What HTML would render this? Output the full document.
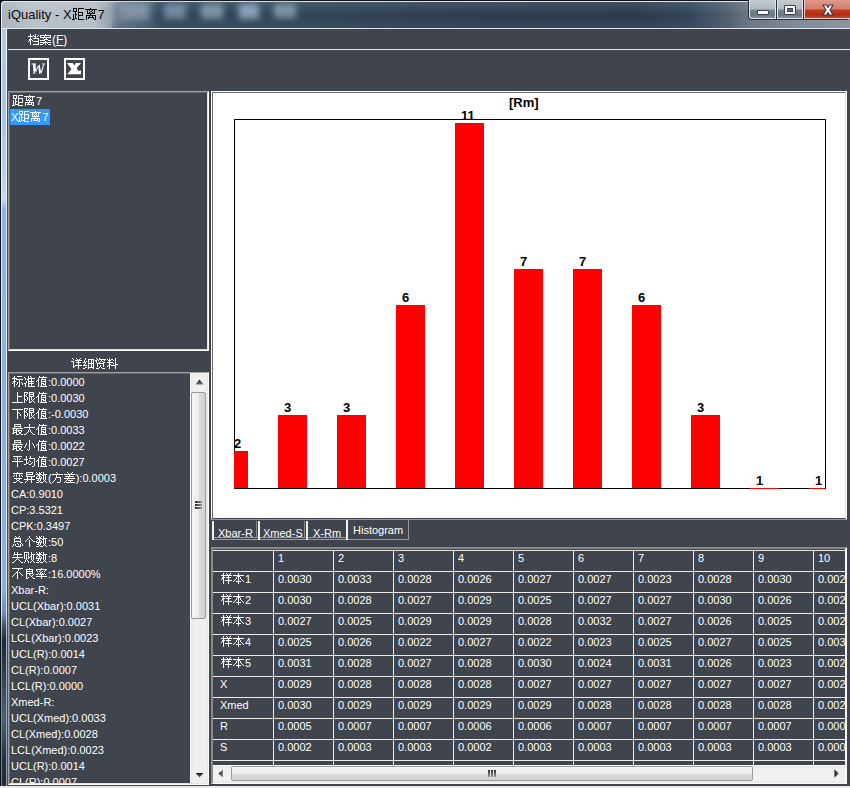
<!DOCTYPE html>
<html><head><meta charset="utf-8"><title>iQuality</title>
<style>
*{margin:0;padding:0;box-sizing:border-box}
html,body{width:850px;height:788px;overflow:hidden;background:#40454d;font-family:"Liberation Sans",sans-serif;}
.a{position:absolute}
.g{display:inline-block;fill:currentColor;shape-rendering:crispEdges}
.txt{position:absolute;font-size:11px;color:#fff;white-space:nowrap;line-height:16px}
.lbl{position:absolute;font:bold 13px "Liberation Sans",sans-serif;color:#000;line-height:14px;white-space:nowrap}
.hl{position:absolute;left:0;width:632px;height:1px;background:#ececec}
.vl{position:absolute;top:0;width:1px;height:215px;background:#ececec}
.tab{position:absolute;top:520px;height:20px;border-top:1px solid #8a8a8a;border-left:1px solid #fff;border-right:1px solid #8a8a8a;border-bottom:1px solid #8a8a8a;font-size:11px;color:#fff;white-space:nowrap;line-height:16px}
</style></head><body>
<div class="a" style="left:8px;top:29px;width:842px;height:759px;background:#40454d"></div>
<div class="a" style="left:0;top:0;width:850px;height:1px;background:#0d1218"></div>
<div class="a" style="left:1px;top:1px;width:849px;height:1px;background:#dfe6ec"></div>
<div class="a" style="left:0;top:2px;width:850px;height:26px;background:linear-gradient(90deg,#a9b2bb 0px,#b9c1c9 30px,#b6bec6 95px,#97a3ae 110px,#6a7d90 118px,#4a5e72 150px,#34485b 160px,#33475a 300px,#2e4051 450px,#2c3d4d 640px,#34475a 690px,#4f5f6e 725px,#6c7884 750px,#808c97 800px,#8a95a0 850px)"></div>
<div class="a" style="left:112px;top:19px;width:600px;height:9px;background:linear-gradient(180deg,rgba(70,90,110,0),rgba(70,90,110,.35));"></div>
<div class="a" style="left:119px;top:4px;width:30px;height:15px;background:#7f92a4;filter:blur(3px)"></div>
<div class="a" style="left:164px;top:4px;width:22px;height:15px;background:#6f86a0;filter:blur(3px)"></div>
<div class="a" style="left:201px;top:4px;width:22px;height:15px;background:#7890a6;filter:blur(3px)"></div>
<div class="a" style="left:239px;top:4px;width:20px;height:15px;background:#86a0b8;filter:blur(3px)"></div>
<div class="a" style="left:274px;top:4px;width:22px;height:14px;background:#7a91a6;filter:blur(3px)"></div>
<div class="a" style="left:0;top:2px;width:1px;height:26px;background:#0d1218"></div>
<div class="a" style="left:1px;top:2px;width:1px;height:26px;background:#e9eef3"></div>
<div class="a" style="left:0;top:2px;width:850px;height:12px;background:linear-gradient(180deg,rgba(255,255,255,.10),rgba(255,255,255,0))"></div>
<svg class="a" style="left:0;top:0" width="8" height="8"><path d="M0 0H8V1H5Q1 1 1 5V8H0Z" fill="#0d1218"/><path d="M8 1V2H5.5Q2 2 2 5.5V8H1V5Q1 1 5 1Z" fill="#e9eef3"/></svg>
<div class="a" style="left:1px;top:28px;width:849px;height:1px;background:#dde4ea"></div>
<div class="a" style="left:8px;top:7px;font-size:13px;line-height:16px;color:#0a0a0a;white-space:nowrap">iQuality - X<svg class="g" width="13" height="13" style="vertical-align:-1px"><path d="M1 1h4v1h-4zM6 1h6v1h-6zM1 2h1v1h-1zM4 2h1v1h-1zM6 2h1v1h-1zM1 3h1v1h-1zM4 3h1v1h-1zM6 3h1v1h-1zM1 4h4v1h-4zM6 4h1v1h-1zM3 5h1v1h-1zM6 5h5v1h-5zM3 6h1v1h-1zM6 6h1v1h-1zM10 6h1v1h-1zM1 7h1v1h-1zM3 7h2v1h-2zM6 7h1v1h-1zM10 7h1v1h-1zM1 8h1v1h-1zM3 8h1v1h-1zM6 8h5v1h-5zM1 9h1v1h-1zM3 9h1v1h-1zM6 9h1v1h-1zM1 10h1v1h-1zM3 10h1v1h-1zM6 10h1v1h-1zM1 11h1v1h-1zM3 11h2v1h-2zM6 11h1v1h-1zM0 12h3v1h-3zM6 12h6v1h-6z"/></svg><svg class="g" width="13" height="13" style="vertical-align:-1px"><path d="M5 1h1v1h-1zM0 2h12v1h-12zM2 3h1v1h-1zM4 3h1v1h-1zM7 3h1v1h-1zM9 3h1v1h-1zM2 4h1v1h-1zM5 4h2v1h-2zM9 4h1v1h-1zM2 5h1v1h-1zM4 5h1v1h-1zM7 5h1v1h-1zM9 5h1v1h-1zM2 6h8v1h-8zM5 7h1v1h-1zM1 8h10v1h-10zM1 9h1v1h-1zM4 9h1v1h-1zM7 9h1v1h-1zM10 9h1v1h-1zM1 10h1v1h-1zM3 10h6v1h-6zM10 10h1v1h-1zM1 11h1v1h-1zM3 11h1v1h-1zM8 11h1v1h-1zM10 11h1v1h-1zM1 12h1v1h-1zM9 12h2v1h-2z"/></svg>7</div>
<div class="a" style="left:748px;top:0;width:102px;height:20px;background:#2a3038;border-radius:0 0 4px 4px"></div>
<div class="a" style="left:749px;top:0;width:27px;height:19px;border:1px solid #dfe3e7;border-top:none;border-radius:0 0 0 3px;background:linear-gradient(180deg,#c4cad0 0,#b0b8c0 9px,#7a8692 10px,#6a7783 15px,#8d98a3 19px)"></div>
<div class="a" style="left:777px;top:0;width:26px;height:19px;border:1px solid #dfe3e7;border-top:none;background:linear-gradient(180deg,#c4cad0 0,#b0b8c0 9px,#7a8692 10px,#6a7783 15px,#8d98a3 19px)"></div>
<div class="a" style="left:804px;top:0;width:46px;height:19px;border:1px solid #f0c8c0;border-top:none;border-right:none;background:linear-gradient(180deg,#e09a8a 0,#d47d6b 9px,#c4381f 10px,#b22e16 15px,#c65840 19px)"></div>
<div class="a" style="left:803px;top:0;width:1px;height:19px;background:#5a1a10"></div>
<div class="a" style="left:757px;top:10px;width:12px;height:5px;background:#fff;border:1px solid #3a4250;border-radius:1px"></div>
<div class="a" style="left:784px;top:5px;width:12px;height:10px;background:#fff;border:1px solid #3a4250;border-radius:1px"></div>
<div class="a" style="left:787px;top:8px;width:6px;height:4px;background:#5d6976;border:1px solid #3a4250"></div>
<svg class="a" style="left:820px;top:3px" width="16" height="14" viewBox="0 0 16 14"><path d="M3 2 L6.5 2 L8 4.5 L9.5 2 L13 2 L10 7 L13 12 L9.5 12 L8 9.5 L6.5 12 L3 12 L6 7 Z" fill="#fff" stroke="#394250" stroke-width="1.2" stroke-linejoin="round"/></svg>
<div class="a" style="left:0;top:29px;width:1px;height:759px;background:#0a0f16"></div>
<div class="a" style="left:1px;top:29px;width:1px;height:759px;background:linear-gradient(180deg,#f2f6fa 0,#e8f0f8 580px,#8a9aaa 612px,#707e8c 759px)"></div>
<div class="a" style="left:2px;top:29px;width:4px;height:759px;background:linear-gradient(180deg,#b4c8e4 0,#a8c4ea 90px,#b8d0f0 150px,#c4daf4 170px,#8cb2e8 180px,#88aede 560px,#6a8cb8 585px,#3a5068 598px,#1e2c3a 612px,#2a3c4e 640px,#4a6276 690px,#23313f 730px,#1e2a36 759px)"></div>
<div class="a" style="left:6px;top:29px;width:1px;height:759px;background:linear-gradient(180deg,#eef4fa 0,#e0eaf6 580px,#a0b0c0 612px,#90a0b0 759px)"></div>
<div class="a" style="left:7px;top:29px;width:1px;height:759px;background:#3c4e64"></div>
<div class="txt" style="left:28px;top:32px;"><svg class="g" width="12" height="12" style="vertical-align:-1px"><path d="M2 1h1v1h-1zM7 1h1v1h-1zM2 2h1v1h-1zM5 2h1v1h-1zM7 2h1v1h-1zM10 2h1v1h-1zM0 3h5v1h-5zM6 3h2v1h-2zM9 3h1v1h-1zM2 4h1v1h-1zM7 4h1v1h-1zM2 5h1v1h-1zM5 5h6v1h-6zM1 6h3v1h-3zM10 6h1v1h-1zM1 7h2v1h-2zM4 7h1v1h-1zM10 7h1v1h-1zM0 8h1v1h-1zM2 8h1v1h-1zM5 8h6v1h-6zM2 9h1v1h-1zM10 9h1v1h-1zM2 10h1v1h-1zM10 10h1v1h-1zM2 11h1v1h-1zM5 11h6v1h-6z"/></svg><svg class="g" width="12" height="12" style="vertical-align:-1px"><path d="M5 1h1v1h-1zM0 2h11v1h-11zM0 3h1v1h-1zM4 3h1v1h-1zM10 3h1v1h-1zM0 4h11v1h-11zM3 5h1v1h-1zM6 5h1v1h-1zM4 6h4v1h-4zM0 7h5v1h-5zM8 7h3v1h-3zM5 8h1v1h-1zM0 9h11v1h-11zM3 10h1v1h-1zM5 10h1v1h-1zM7 10h1v1h-1zM0 11h3v1h-3zM5 11h1v1h-1zM8 11h3v1h-3z"/></svg><span style="font-size:12px">(<u>F</u>)</span></div>
<div class="a" style="left:8px;top:49px;width:842px;height:1px;background:#e4e4e4"></div>
<div class="a" style="left:28px;top:58px;width:21px;height:22px;border:2px solid #fff"></div>
<svg class="a" style="left:28px;top:58px" width="21" height="22" viewBox="0 0 21 22"><path fill="#fff" d="M3.4 5.6H8V6.6H3.4ZM5 6L7.6 6L8.2 16L5.6 16ZM6.3 16L7.5 16L11.2 6.5L10.4 6.5ZM10.2 6.5L11.6 6.5L13.4 16L11.2 16ZM12.3 16L13.5 16L16.2 6.2L15.2 6.2ZM14.2 5.6H17V6.6H14.2Z"/></svg>
<div class="a" style="left:64px;top:58px;width:21px;height:22px;border:2px solid #fff"></div>
<svg class="a" style="left:64px;top:58px" width="21" height="22" viewBox="0 0 21 22"><path fill="#fff" d="M3 5.1L8.6 5.1L17 16.2L11.2 16.2ZM11.8 5.1L17 5.1L12.4 10.4L10.4 7.8ZM3.3 16.2L7.8 10.8L11.4 16.2ZM12.8 13.2L17 12.6L17 16.2L12 16.2Z"/></svg>
<div class="a" style="left:8px;top:91px;width:201px;height:260px;border-top:1px solid #a0a0a0;border-left:1px solid #a0a0a0;border-right:1px solid #fff;border-bottom:1px solid #fff"></div>
<div class="a" style="left:9px;top:92px;width:199px;height:258px;border-top:1px solid #696969;border-left:1px solid #696969;border-right:1px solid #e3e3e3;border-bottom:1px solid #e3e3e3"></div>
<div class="txt" style="left:12px;top:93px"><svg class="g" width="12" height="12" style="vertical-align:-1px"><path d="M1 1h4v1h-4zM6 1h5v1h-5zM1 2h1v1h-1zM4 2h1v1h-1zM6 2h1v1h-1zM1 3h1v1h-1zM4 3h1v1h-1zM6 3h1v1h-1zM1 4h4v1h-4zM6 4h5v1h-5zM3 5h1v1h-1zM6 5h1v1h-1zM10 5h1v1h-1zM1 6h1v1h-1zM3 6h1v1h-1zM6 6h1v1h-1zM10 6h1v1h-1zM1 7h1v1h-1zM3 7h2v1h-2zM6 7h1v1h-1zM10 7h1v1h-1zM1 8h1v1h-1zM3 8h1v1h-1zM6 8h5v1h-5zM1 9h1v1h-1zM3 9h1v1h-1zM6 9h1v1h-1zM1 10h1v1h-1zM3 10h4v1h-4zM0 11h3v1h-3zM6 11h5v1h-5z"/></svg><svg class="g" width="12" height="12" style="vertical-align:-1px"><path d="M5 1h1v1h-1zM0 2h11v1h-11zM2 3h1v1h-1zM4 3h1v1h-1zM6 3h1v1h-1zM8 3h1v1h-1zM2 4h1v1h-1zM5 4h1v1h-1zM8 4h1v1h-1zM2 5h1v1h-1zM4 5h1v1h-1zM6 5h1v1h-1zM8 5h1v1h-1zM2 6h7v1h-7zM5 7h1v1h-1zM1 8h9v1h-9zM1 9h1v1h-1zM4 9h1v1h-1zM7 9h1v1h-1zM9 9h1v1h-1zM1 10h1v1h-1zM3 10h5v1h-5zM9 10h1v1h-1zM1 11h1v1h-1zM8 11h2v1h-2z"/></svg>7</div>
<div class="a" style="left:10px;top:109px;width:40px;height:16px;background:#3399ff"></div>
<div class="txt" style="left:11px;top:109px">X<svg class="g" width="12" height="12" style="vertical-align:-1px"><path d="M1 1h4v1h-4zM6 1h5v1h-5zM1 2h1v1h-1zM4 2h1v1h-1zM6 2h1v1h-1zM1 3h1v1h-1zM4 3h1v1h-1zM6 3h1v1h-1zM1 4h4v1h-4zM6 4h5v1h-5zM3 5h1v1h-1zM6 5h1v1h-1zM10 5h1v1h-1zM1 6h1v1h-1zM3 6h1v1h-1zM6 6h1v1h-1zM10 6h1v1h-1zM1 7h1v1h-1zM3 7h2v1h-2zM6 7h1v1h-1zM10 7h1v1h-1zM1 8h1v1h-1zM3 8h1v1h-1zM6 8h5v1h-5zM1 9h1v1h-1zM3 9h1v1h-1zM6 9h1v1h-1zM1 10h1v1h-1zM3 10h4v1h-4zM0 11h3v1h-3zM6 11h5v1h-5z"/></svg><svg class="g" width="12" height="12" style="vertical-align:-1px"><path d="M5 1h1v1h-1zM0 2h11v1h-11zM2 3h1v1h-1zM4 3h1v1h-1zM6 3h1v1h-1zM8 3h1v1h-1zM2 4h1v1h-1zM5 4h1v1h-1zM8 4h1v1h-1zM2 5h1v1h-1zM4 5h1v1h-1zM6 5h1v1h-1zM8 5h1v1h-1zM2 6h7v1h-7zM5 7h1v1h-1zM1 8h9v1h-9zM1 9h1v1h-1zM4 9h1v1h-1zM7 9h1v1h-1zM9 9h1v1h-1zM1 10h1v1h-1zM3 10h5v1h-5zM9 10h1v1h-1zM1 11h1v1h-1zM8 11h2v1h-2z"/></svg>7</div>
<div class="txt" style="left:71px;top:356px"><svg class="g" width="12" height="12" style="vertical-align:-1px"><path d="M1 1h1v1h-1zM5 1h1v1h-1zM9 1h1v1h-1zM2 2h1v1h-1zM6 2h1v1h-1zM8 2h1v1h-1zM4 3h7v1h-7zM0 4h3v1h-3zM7 4h1v1h-1zM2 5h1v1h-1zM5 5h5v1h-5zM2 6h1v1h-1zM7 6h1v1h-1zM2 7h1v1h-1zM7 7h1v1h-1zM2 8h1v1h-1zM4 8h7v1h-7zM2 9h2v1h-2zM7 9h1v1h-1zM2 10h1v1h-1zM7 10h1v1h-1zM7 11h1v1h-1z"/></svg><svg class="g" width="12" height="12" style="vertical-align:-1px"><path d="M2 1h1v1h-1zM2 2h1v1h-1zM5 2h6v1h-6zM1 3h1v1h-1zM5 3h1v1h-1zM8 3h1v1h-1zM10 3h1v1h-1zM1 4h1v1h-1zM3 4h1v1h-1zM5 4h1v1h-1zM8 4h1v1h-1zM10 4h1v1h-1zM0 5h3v1h-3zM5 5h1v1h-1zM8 5h1v1h-1zM10 5h1v1h-1zM2 6h1v1h-1zM5 6h6v1h-6zM1 7h1v1h-1zM5 7h1v1h-1zM8 7h1v1h-1zM10 7h1v1h-1zM0 8h4v1h-4zM5 8h1v1h-1zM8 8h1v1h-1zM10 8h1v1h-1zM5 9h1v1h-1zM8 9h1v1h-1zM10 9h1v1h-1zM2 10h2v1h-2zM5 10h6v1h-6zM0 11h2v1h-2zM5 11h1v1h-1zM10 11h1v1h-1z"/></svg><svg class="g" width="12" height="12" style="vertical-align:-1px"><path d="M1 1h1v1h-1zM4 1h1v1h-1zM2 2h1v1h-1zM4 2h7v1h-7zM0 3h2v1h-2zM3 3h1v1h-1zM6 3h1v1h-1zM9 3h1v1h-1zM1 4h1v1h-1zM5 4h1v1h-1zM7 4h1v1h-1zM1 5h1v1h-1zM4 5h1v1h-1zM8 5h2v1h-2zM2 6h7v1h-7zM2 7h1v1h-1zM8 7h1v1h-1zM2 8h1v1h-1zM5 8h1v1h-1zM8 8h1v1h-1zM2 9h1v1h-1zM5 9h1v1h-1zM8 9h1v1h-1zM4 10h1v1h-1zM6 10h1v1h-1zM1 11h3v1h-3zM7 11h3v1h-3z"/></svg><svg class="g" width="12" height="12" style="vertical-align:-1px"><path d="M2 1h1v1h-1zM8 1h1v1h-1zM0 2h1v1h-1zM2 2h1v1h-1zM4 2h2v1h-2zM8 2h1v1h-1zM1 3h3v1h-3zM6 3h1v1h-1zM8 3h1v1h-1zM2 4h1v1h-1zM8 4h1v1h-1zM0 5h6v1h-6zM8 5h1v1h-1zM2 6h1v1h-1zM6 6h1v1h-1zM8 6h1v1h-1zM2 7h2v1h-2zM8 7h3v1h-3zM1 8h2v1h-2zM4 8h5v1h-5zM0 9h1v1h-1zM2 9h1v1h-1zM8 9h1v1h-1zM2 10h1v1h-1zM8 10h1v1h-1zM2 11h1v1h-1zM8 11h1v1h-1z"/></svg></div>
<div class="a" style="left:8px;top:372px;width:201px;height:413px;border-top:1px solid #a0a0a0;border-left:1px solid #a0a0a0;border-right:1px solid #fff;border-bottom:1px solid #fff"></div>
<div class="a" style="left:9px;top:373px;width:199px;height:411px;border-top:1px solid #696969;border-left:1px solid #696969;border-right:1px solid #e3e3e3;border-bottom:1px solid #e3e3e3"></div>
<div class="a" style="left:9px;top:373px;width:181px;height:410px;overflow:hidden">
<div class="txt" style="left:3px;top:1px"><svg class="g" width="12" height="12" style="vertical-align:-1px"><path d="M2 1h1v1h-1zM5 1h5v1h-5zM2 2h1v1h-1zM0 3h5v1h-5zM2 4h1v1h-1zM4 4h7v1h-7zM2 5h1v1h-1zM7 5h1v1h-1zM1 6h3v1h-3zM7 6h1v1h-1zM1 7h2v1h-2zM5 7h1v1h-1zM7 7h1v1h-1zM9 7h1v1h-1zM0 8h1v1h-1zM2 8h1v1h-1zM5 8h1v1h-1zM7 8h1v1h-1zM10 8h1v1h-1zM2 9h1v1h-1zM4 9h1v1h-1zM7 9h1v1h-1zM10 9h1v1h-1zM2 10h1v1h-1zM7 10h1v1h-1zM2 11h1v1h-1zM6 11h2v1h-2z"/></svg><svg class="g" width="12" height="12" style="vertical-align:-1px"><path d="M4 1h1v1h-1zM6 1h1v1h-1zM0 2h1v1h-1zM4 2h1v1h-1zM7 2h1v1h-1zM1 3h1v1h-1zM4 3h7v1h-7zM1 4h1v1h-1zM3 4h2v1h-2zM7 4h1v1h-1zM4 5h1v1h-1zM7 5h1v1h-1zM2 6h1v1h-1zM4 6h6v1h-6zM2 7h1v1h-1zM4 7h1v1h-1zM7 7h1v1h-1zM0 8h2v1h-2zM4 8h6v1h-6zM1 9h1v1h-1zM4 9h1v1h-1zM7 9h1v1h-1zM1 10h1v1h-1zM4 10h1v1h-1zM7 10h1v1h-1zM1 11h1v1h-1zM4 11h7v1h-7z"/></svg><svg class="g" width="12" height="12" style="vertical-align:-1px"><path d="M3 1h1v1h-1zM7 1h1v1h-1zM3 2h8v1h-8zM2 3h1v1h-1zM6 3h1v1h-1zM2 4h1v1h-1zM5 4h5v1h-5zM1 5h2v1h-2zM5 5h1v1h-1zM9 5h1v1h-1zM0 6h1v1h-1zM2 6h1v1h-1zM5 6h5v1h-5zM2 7h1v1h-1zM5 7h1v1h-1zM9 7h1v1h-1zM2 8h1v1h-1zM5 8h3v1h-3zM9 8h1v1h-1zM2 9h1v1h-1zM5 9h1v1h-1zM7 9h3v1h-3zM2 10h1v1h-1zM5 10h1v1h-1zM9 10h1v1h-1zM2 11h1v1h-1zM4 11h7v1h-7z"/></svg>:0.0000</div>
<div class="txt" style="left:3px;top:17px"><svg class="g" width="12" height="12" style="vertical-align:-1px"><path d="M5 1h1v1h-1zM5 2h1v1h-1zM5 3h1v1h-1zM5 4h1v1h-1zM5 5h5v1h-5zM5 6h1v1h-1zM5 7h1v1h-1zM5 8h1v1h-1zM5 9h1v1h-1zM5 10h1v1h-1zM0 11h11v1h-11z"/></svg><svg class="g" width="12" height="12" style="vertical-align:-1px"><path d="M0 1h4v1h-4zM5 1h5v1h-5zM0 2h1v1h-1zM3 2h1v1h-1zM5 2h1v1h-1zM9 2h1v1h-1zM0 3h1v1h-1zM2 3h1v1h-1zM5 3h5v1h-5zM0 4h2v1h-2zM5 4h1v1h-1zM9 4h1v1h-1zM0 5h1v1h-1zM2 5h1v1h-1zM5 5h5v1h-5zM0 6h1v1h-1zM3 6h1v1h-1zM5 6h1v1h-1zM7 6h1v1h-1zM0 7h1v1h-1zM3 7h1v1h-1zM5 7h1v1h-1zM7 7h1v1h-1zM10 7h1v1h-1zM0 8h2v1h-2zM3 8h1v1h-1zM5 8h1v1h-1zM7 8h1v1h-1zM9 8h1v1h-1zM0 9h1v1h-1zM2 9h1v1h-1zM5 9h1v1h-1zM8 9h1v1h-1zM0 10h1v1h-1zM5 10h1v1h-1zM7 10h1v1h-1zM9 10h1v1h-1zM0 11h1v1h-1zM5 11h2v1h-2zM10 11h1v1h-1z"/></svg><svg class="g" width="12" height="12" style="vertical-align:-1px"><path d="M3 1h1v1h-1zM7 1h1v1h-1zM3 2h8v1h-8zM2 3h1v1h-1zM6 3h1v1h-1zM2 4h1v1h-1zM5 4h5v1h-5zM1 5h2v1h-2zM5 5h1v1h-1zM9 5h1v1h-1zM0 6h1v1h-1zM2 6h1v1h-1zM5 6h5v1h-5zM2 7h1v1h-1zM5 7h1v1h-1zM9 7h1v1h-1zM2 8h1v1h-1zM5 8h3v1h-3zM9 8h1v1h-1zM2 9h1v1h-1zM5 9h1v1h-1zM7 9h3v1h-3zM2 10h1v1h-1zM5 10h1v1h-1zM9 10h1v1h-1zM2 11h1v1h-1zM4 11h7v1h-7z"/></svg>:0.0030</div>
<div class="txt" style="left:3px;top:33px"><svg class="g" width="12" height="12" style="vertical-align:-1px"><path d="M0 2h11v1h-11zM5 3h1v1h-1zM5 4h1v1h-1zM5 5h2v1h-2zM5 6h1v1h-1zM7 6h1v1h-1zM5 7h1v1h-1zM8 7h1v1h-1zM5 8h1v1h-1zM8 8h1v1h-1zM5 9h1v1h-1zM5 10h1v1h-1zM5 11h1v1h-1z"/></svg><svg class="g" width="12" height="12" style="vertical-align:-1px"><path d="M0 1h4v1h-4zM5 1h5v1h-5zM0 2h1v1h-1zM3 2h1v1h-1zM5 2h1v1h-1zM9 2h1v1h-1zM0 3h1v1h-1zM2 3h1v1h-1zM5 3h5v1h-5zM0 4h2v1h-2zM5 4h1v1h-1zM9 4h1v1h-1zM0 5h1v1h-1zM2 5h1v1h-1zM5 5h5v1h-5zM0 6h1v1h-1zM3 6h1v1h-1zM5 6h1v1h-1zM7 6h1v1h-1zM0 7h1v1h-1zM3 7h1v1h-1zM5 7h1v1h-1zM7 7h1v1h-1zM10 7h1v1h-1zM0 8h2v1h-2zM3 8h1v1h-1zM5 8h1v1h-1zM7 8h1v1h-1zM9 8h1v1h-1zM0 9h1v1h-1zM2 9h1v1h-1zM5 9h1v1h-1zM8 9h1v1h-1zM0 10h1v1h-1zM5 10h1v1h-1zM7 10h1v1h-1zM9 10h1v1h-1zM0 11h1v1h-1zM5 11h2v1h-2zM10 11h1v1h-1z"/></svg><svg class="g" width="12" height="12" style="vertical-align:-1px"><path d="M3 1h1v1h-1zM7 1h1v1h-1zM3 2h8v1h-8zM2 3h1v1h-1zM6 3h1v1h-1zM2 4h1v1h-1zM5 4h5v1h-5zM1 5h2v1h-2zM5 5h1v1h-1zM9 5h1v1h-1zM0 6h1v1h-1zM2 6h1v1h-1zM5 6h5v1h-5zM2 7h1v1h-1zM5 7h1v1h-1zM9 7h1v1h-1zM2 8h1v1h-1zM5 8h3v1h-3zM9 8h1v1h-1zM2 9h1v1h-1zM5 9h1v1h-1zM7 9h3v1h-3zM2 10h1v1h-1zM5 10h1v1h-1zM9 10h1v1h-1zM2 11h1v1h-1zM4 11h7v1h-7z"/></svg>:-0.0030</div>
<div class="txt" style="left:3px;top:49px"><svg class="g" width="12" height="12" style="vertical-align:-1px"><path d="M2 1h7v1h-7zM2 2h1v1h-1zM8 2h1v1h-1zM2 3h7v1h-7zM2 4h1v1h-1zM8 4h1v1h-1zM0 5h11v1h-11zM1 6h1v1h-1zM4 6h1v1h-1zM1 7h9v1h-9zM1 8h1v1h-1zM4 8h1v1h-1zM6 8h1v1h-1zM9 8h1v1h-1zM1 9h4v1h-4zM7 9h2v1h-2zM0 10h2v1h-2zM4 10h1v1h-1zM7 10h2v1h-2zM4 11h3v1h-3zM9 11h2v1h-2z"/></svg><svg class="g" width="12" height="12" style="vertical-align:-1px"><path d="M5 1h1v1h-1zM5 2h1v1h-1zM5 3h1v1h-1zM0 4h11v1h-11zM5 5h1v1h-1zM5 6h1v1h-1zM4 7h1v1h-1zM6 7h1v1h-1zM4 8h1v1h-1zM6 8h1v1h-1zM3 9h1v1h-1zM7 9h1v1h-1zM2 10h1v1h-1zM8 10h1v1h-1zM0 11h2v1h-2zM9 11h2v1h-2z"/></svg><svg class="g" width="12" height="12" style="vertical-align:-1px"><path d="M3 1h1v1h-1zM7 1h1v1h-1zM3 2h8v1h-8zM2 3h1v1h-1zM6 3h1v1h-1zM2 4h1v1h-1zM5 4h5v1h-5zM1 5h2v1h-2zM5 5h1v1h-1zM9 5h1v1h-1zM0 6h1v1h-1zM2 6h1v1h-1zM5 6h5v1h-5zM2 7h1v1h-1zM5 7h1v1h-1zM9 7h1v1h-1zM2 8h1v1h-1zM5 8h3v1h-3zM9 8h1v1h-1zM2 9h1v1h-1zM5 9h1v1h-1zM7 9h3v1h-3zM2 10h1v1h-1zM5 10h1v1h-1zM9 10h1v1h-1zM2 11h1v1h-1zM4 11h7v1h-7z"/></svg>:0.0033</div>
<div class="txt" style="left:3px;top:65px"><svg class="g" width="12" height="12" style="vertical-align:-1px"><path d="M2 1h7v1h-7zM2 2h1v1h-1zM8 2h1v1h-1zM2 3h7v1h-7zM2 4h1v1h-1zM8 4h1v1h-1zM0 5h11v1h-11zM1 6h1v1h-1zM4 6h1v1h-1zM1 7h9v1h-9zM1 8h1v1h-1zM4 8h1v1h-1zM6 8h1v1h-1zM9 8h1v1h-1zM1 9h4v1h-4zM7 9h2v1h-2zM0 10h2v1h-2zM4 10h1v1h-1zM7 10h2v1h-2zM4 11h3v1h-3zM9 11h2v1h-2z"/></svg><svg class="g" width="12" height="12" style="vertical-align:-1px"><path d="M5 1h1v1h-1zM5 2h1v1h-1zM5 3h1v1h-1zM2 4h1v1h-1zM5 4h1v1h-1zM8 4h1v1h-1zM2 5h1v1h-1zM5 5h1v1h-1zM9 5h1v1h-1zM1 6h1v1h-1zM5 6h1v1h-1zM9 6h1v1h-1zM1 7h1v1h-1zM5 7h1v1h-1zM10 7h1v1h-1zM0 8h1v1h-1zM5 8h1v1h-1zM10 8h1v1h-1zM5 9h1v1h-1zM3 10h1v1h-1zM5 10h1v1h-1zM4 11h1v1h-1z"/></svg><svg class="g" width="12" height="12" style="vertical-align:-1px"><path d="M3 1h1v1h-1zM7 1h1v1h-1zM3 2h8v1h-8zM2 3h1v1h-1zM6 3h1v1h-1zM2 4h1v1h-1zM5 4h5v1h-5zM1 5h2v1h-2zM5 5h1v1h-1zM9 5h1v1h-1zM0 6h1v1h-1zM2 6h1v1h-1zM5 6h5v1h-5zM2 7h1v1h-1zM5 7h1v1h-1zM9 7h1v1h-1zM2 8h1v1h-1zM5 8h3v1h-3zM9 8h1v1h-1zM2 9h1v1h-1zM5 9h1v1h-1zM7 9h3v1h-3zM2 10h1v1h-1zM5 10h1v1h-1zM9 10h1v1h-1zM2 11h1v1h-1zM4 11h7v1h-7z"/></svg>:0.0022</div>
<div class="txt" style="left:3px;top:81px"><svg class="g" width="12" height="12" style="vertical-align:-1px"><path d="M1 1h9v1h-9zM5 2h1v1h-1zM2 3h1v1h-1zM5 3h1v1h-1zM8 3h1v1h-1zM3 4h1v1h-1zM5 4h1v1h-1zM7 4h1v1h-1zM5 5h1v1h-1zM0 6h11v1h-11zM5 7h1v1h-1zM5 8h1v1h-1zM5 9h1v1h-1zM5 10h1v1h-1zM5 11h1v1h-1z"/></svg><svg class="g" width="12" height="12" style="vertical-align:-1px"><path d="M2 1h1v1h-1zM6 1h1v1h-1zM2 2h1v1h-1zM6 2h1v1h-1zM2 3h1v1h-1zM5 3h6v1h-6zM0 4h4v1h-4zM10 4h1v1h-1zM2 5h1v1h-1zM5 5h1v1h-1zM10 5h1v1h-1zM2 6h1v1h-1zM6 6h1v1h-1zM10 6h1v1h-1zM2 7h1v1h-1zM4 7h1v1h-1zM8 7h1v1h-1zM10 7h1v1h-1zM2 8h2v1h-2zM7 8h1v1h-1zM10 8h1v1h-1zM0 9h2v1h-2zM5 9h2v1h-2zM10 9h1v1h-1zM10 10h1v1h-1zM8 11h2v1h-2z"/></svg><svg class="g" width="12" height="12" style="vertical-align:-1px"><path d="M3 1h1v1h-1zM7 1h1v1h-1zM3 2h8v1h-8zM2 3h1v1h-1zM6 3h1v1h-1zM2 4h1v1h-1zM5 4h5v1h-5zM1 5h2v1h-2zM5 5h1v1h-1zM9 5h1v1h-1zM0 6h1v1h-1zM2 6h1v1h-1zM5 6h5v1h-5zM2 7h1v1h-1zM5 7h1v1h-1zM9 7h1v1h-1zM2 8h1v1h-1zM5 8h3v1h-3zM9 8h1v1h-1zM2 9h1v1h-1zM5 9h1v1h-1zM7 9h3v1h-3zM2 10h1v1h-1zM5 10h1v1h-1zM9 10h1v1h-1zM2 11h1v1h-1zM4 11h7v1h-7z"/></svg>:0.0027</div>
<div class="txt" style="left:3px;top:97px"><svg class="g" width="12" height="12" style="vertical-align:-1px"><path d="M5 1h1v1h-1zM1 2h10v1h-10zM4 3h1v1h-1zM7 3h1v1h-1zM2 4h1v1h-1zM4 4h1v1h-1zM7 4h1v1h-1zM9 4h1v1h-1zM1 5h1v1h-1zM4 5h1v1h-1zM7 5h1v1h-1zM10 5h1v1h-1zM2 7h8v1h-8zM4 8h1v1h-1zM7 8h1v1h-1zM5 9h2v1h-2zM4 10h1v1h-1zM7 10h1v1h-1zM1 11h3v1h-3zM8 11h3v1h-3z"/></svg><svg class="g" width="12" height="12" style="vertical-align:-1px"><path d="M2 1h7v1h-7zM2 2h1v1h-1zM8 2h1v1h-1zM2 3h7v1h-7zM2 4h1v1h-1zM10 4h1v1h-1zM2 5h9v1h-9zM3 6h1v1h-1zM7 6h1v1h-1zM3 7h1v1h-1zM7 7h1v1h-1zM0 8h11v1h-11zM3 9h1v1h-1zM7 9h1v1h-1zM2 10h1v1h-1zM7 10h1v1h-1zM1 11h1v1h-1zM7 11h1v1h-1z"/></svg><svg class="g" width="12" height="12" style="vertical-align:-1px"><path d="M0 1h1v1h-1zM3 1h1v1h-1zM5 1h1v1h-1zM7 1h1v1h-1zM1 2h1v1h-1zM3 2h2v1h-2zM7 2h1v1h-1zM0 3h6v1h-6zM7 3h4v1h-4zM2 4h2v1h-2zM6 4h2v1h-2zM9 4h1v1h-1zM1 5h1v1h-1zM3 5h2v1h-2zM7 5h1v1h-1zM9 5h1v1h-1zM0 6h1v1h-1zM3 6h1v1h-1zM5 6h1v1h-1zM7 6h1v1h-1zM9 6h1v1h-1zM0 7h6v1h-6zM7 7h1v1h-1zM9 7h1v1h-1zM2 8h1v1h-1zM4 8h1v1h-1zM7 8h1v1h-1zM9 8h1v1h-1zM1 9h2v1h-2zM4 9h1v1h-1zM8 9h1v1h-1zM3 10h1v1h-1zM7 10h1v1h-1zM9 10h1v1h-1zM0 11h3v1h-3zM4 11h3v1h-3zM10 11h1v1h-1z"/></svg>(<svg class="g" width="12" height="12" style="vertical-align:-1px"><path d="M4 1h1v1h-1zM5 2h1v1h-1zM0 3h11v1h-11zM4 4h1v1h-1zM4 5h1v1h-1zM4 6h5v1h-5zM3 7h1v1h-1zM8 7h1v1h-1zM3 8h1v1h-1zM8 8h1v1h-1zM2 9h1v1h-1zM8 9h1v1h-1zM1 10h1v1h-1zM8 10h1v1h-1zM0 11h1v1h-1zM5 11h3v1h-3z"/></svg><svg class="g" width="12" height="12" style="vertical-align:-1px"><path d="M3 1h1v1h-1zM8 1h1v1h-1zM4 2h1v1h-1zM7 2h1v1h-1zM0 3h11v1h-11zM5 4h1v1h-1zM1 5h9v1h-9zM4 6h1v1h-1zM0 7h11v1h-11zM3 8h1v1h-1zM2 9h1v1h-1zM4 9h5v1h-5zM1 10h1v1h-1zM6 10h1v1h-1zM0 11h1v1h-1zM2 11h9v1h-9z"/></svg>):0.0003</div>
<div class="txt" style="left:2px;top:113px">CA:0.9010</div>
<div class="txt" style="left:2px;top:129px">CP:3.5321</div>
<div class="txt" style="left:2px;top:145px">CPK:0.3497</div>
<div class="txt" style="left:3px;top:161px"><svg class="g" width="12" height="12" style="vertical-align:-1px"><path d="M3 1h1v1h-1zM7 1h1v1h-1zM4 2h1v1h-1zM6 2h1v1h-1zM2 3h7v1h-7zM2 4h1v1h-1zM8 4h1v1h-1zM2 5h1v1h-1zM8 5h1v1h-1zM2 6h7v1h-7zM2 7h1v1h-1zM8 7h1v1h-1zM5 8h1v1h-1zM9 8h1v1h-1zM1 9h1v1h-1zM3 9h1v1h-1zM6 9h1v1h-1zM8 9h1v1h-1zM10 9h1v1h-1zM1 10h1v1h-1zM3 10h1v1h-1zM8 10h1v1h-1zM10 10h1v1h-1zM0 11h1v1h-1zM4 11h5v1h-5z"/></svg><svg class="g" width="12" height="12" style="vertical-align:-1px"><path d="M5 1h1v1h-1zM5 2h1v1h-1zM4 3h1v1h-1zM6 3h1v1h-1zM3 4h1v1h-1zM7 4h1v1h-1zM2 5h1v1h-1zM5 5h1v1h-1zM8 5h1v1h-1zM1 6h1v1h-1zM5 6h1v1h-1zM9 6h2v1h-2zM5 7h1v1h-1zM5 8h1v1h-1zM5 9h1v1h-1zM5 10h1v1h-1zM5 11h1v1h-1z"/></svg><svg class="g" width="12" height="12" style="vertical-align:-1px"><path d="M0 1h1v1h-1zM3 1h1v1h-1zM5 1h1v1h-1zM7 1h1v1h-1zM1 2h1v1h-1zM3 2h2v1h-2zM7 2h1v1h-1zM0 3h6v1h-6zM7 3h4v1h-4zM2 4h2v1h-2zM6 4h2v1h-2zM9 4h1v1h-1zM1 5h1v1h-1zM3 5h2v1h-2zM7 5h1v1h-1zM9 5h1v1h-1zM0 6h1v1h-1zM3 6h1v1h-1zM5 6h1v1h-1zM7 6h1v1h-1zM9 6h1v1h-1zM0 7h6v1h-6zM7 7h1v1h-1zM9 7h1v1h-1zM2 8h1v1h-1zM4 8h1v1h-1zM7 8h1v1h-1zM9 8h1v1h-1zM1 9h2v1h-2zM4 9h1v1h-1zM8 9h1v1h-1zM3 10h1v1h-1zM7 10h1v1h-1zM9 10h1v1h-1zM0 11h3v1h-3zM4 11h3v1h-3zM10 11h1v1h-1z"/></svg>:50</div>
<div class="txt" style="left:3px;top:177px"><svg class="g" width="12" height="12" style="vertical-align:-1px"><path d="M2 1h1v1h-1zM5 1h1v1h-1zM2 2h1v1h-1zM5 2h1v1h-1zM2 3h8v1h-8zM1 4h1v1h-1zM5 4h1v1h-1zM5 5h1v1h-1zM0 6h11v1h-11zM5 7h1v1h-1zM4 8h1v1h-1zM6 8h1v1h-1zM3 9h1v1h-1zM7 9h1v1h-1zM2 10h1v1h-1zM8 10h1v1h-1zM0 11h2v1h-2zM9 11h2v1h-2z"/></svg><svg class="g" width="12" height="12" style="vertical-align:-1px"><path d="M0 1h5v1h-5zM7 1h1v1h-1zM0 2h1v1h-1zM4 2h1v1h-1zM7 2h1v1h-1zM0 3h1v1h-1zM2 3h1v1h-1zM4 3h1v1h-1zM7 3h4v1h-4zM0 4h1v1h-1zM2 4h1v1h-1zM4 4h1v1h-1zM7 4h1v1h-1zM9 4h1v1h-1zM0 5h1v1h-1zM2 5h1v1h-1zM4 5h1v1h-1zM6 5h2v1h-2zM9 5h1v1h-1zM0 6h1v1h-1zM2 6h1v1h-1zM4 6h2v1h-2zM7 6h1v1h-1zM9 6h1v1h-1zM0 7h1v1h-1zM2 7h1v1h-1zM4 7h1v1h-1zM7 7h1v1h-1zM9 7h1v1h-1zM2 8h1v1h-1zM7 8h1v1h-1zM9 8h1v1h-1zM1 9h1v1h-1zM3 9h1v1h-1zM8 9h1v1h-1zM1 10h1v1h-1zM4 10h1v1h-1zM7 10h1v1h-1zM9 10h1v1h-1zM0 11h1v1h-1zM4 11h1v1h-1zM6 11h1v1h-1zM10 11h1v1h-1z"/></svg><svg class="g" width="12" height="12" style="vertical-align:-1px"><path d="M0 1h1v1h-1zM3 1h1v1h-1zM5 1h1v1h-1zM7 1h1v1h-1zM1 2h1v1h-1zM3 2h2v1h-2zM7 2h1v1h-1zM0 3h6v1h-6zM7 3h4v1h-4zM2 4h2v1h-2zM6 4h2v1h-2zM9 4h1v1h-1zM1 5h1v1h-1zM3 5h2v1h-2zM7 5h1v1h-1zM9 5h1v1h-1zM0 6h1v1h-1zM3 6h1v1h-1zM5 6h1v1h-1zM7 6h1v1h-1zM9 6h1v1h-1zM0 7h6v1h-6zM7 7h1v1h-1zM9 7h1v1h-1zM2 8h1v1h-1zM4 8h1v1h-1zM7 8h1v1h-1zM9 8h1v1h-1zM1 9h2v1h-2zM4 9h1v1h-1zM8 9h1v1h-1zM3 10h1v1h-1zM7 10h1v1h-1zM9 10h1v1h-1zM0 11h3v1h-3zM4 11h3v1h-3zM10 11h1v1h-1z"/></svg>:8</div>
<div class="txt" style="left:3px;top:193px"><svg class="g" width="12" height="12" style="vertical-align:-1px"><path d="M0 1h11v1h-11zM6 2h1v1h-1zM6 3h1v1h-1zM5 4h1v1h-1zM4 5h2v1h-2zM7 5h1v1h-1zM3 6h1v1h-1zM5 6h1v1h-1zM8 6h1v1h-1zM2 7h1v1h-1zM5 7h1v1h-1zM9 7h1v1h-1zM1 8h1v1h-1zM5 8h1v1h-1zM10 8h1v1h-1zM0 9h1v1h-1zM5 9h1v1h-1zM5 10h1v1h-1zM5 11h1v1h-1z"/></svg><svg class="g" width="12" height="12" style="vertical-align:-1px"><path d="M5 1h1v1h-1zM2 2h7v1h-7zM2 3h1v1h-1zM8 3h1v1h-1zM2 4h7v1h-7zM2 5h1v1h-1zM8 5h1v1h-1zM2 6h7v1h-7zM2 7h1v1h-1zM5 7h1v1h-1zM9 7h1v1h-1zM2 8h1v1h-1zM6 8h1v1h-1zM8 8h1v1h-1zM2 9h1v1h-1zM7 9h1v1h-1zM2 10h1v1h-1zM4 10h1v1h-1zM8 10h1v1h-1zM2 11h2v1h-2zM9 11h2v1h-2z"/></svg><svg class="g" width="12" height="12" style="vertical-align:-1px"><path d="M5 1h1v1h-1zM0 2h11v1h-11zM0 3h1v1h-1zM4 3h1v1h-1zM9 3h1v1h-1zM1 4h1v1h-1zM3 4h1v1h-1zM6 4h1v1h-1zM8 4h1v1h-1zM4 5h2v1h-2zM2 6h1v1h-1zM4 6h1v1h-1zM6 6h1v1h-1zM8 6h1v1h-1zM0 7h2v1h-2zM3 7h5v1h-5zM9 7h1v1h-1zM5 8h1v1h-1zM0 9h11v1h-11zM5 10h1v1h-1zM5 11h1v1h-1z"/></svg>:16.0000%</div>
<div class="txt" style="left:2px;top:209px">Xbar-R:</div>
<div class="txt" style="left:2px;top:225px">UCL(Xbar):0.0031</div>
<div class="txt" style="left:2px;top:241px">CL(Xbar):0.0027</div>
<div class="txt" style="left:2px;top:257px">LCL(Xbar):0.0023</div>
<div class="txt" style="left:2px;top:273px">UCL(R):0.0014</div>
<div class="txt" style="left:2px;top:289px">CL(R):0.0007</div>
<div class="txt" style="left:2px;top:305px">LCL(R):0.0000</div>
<div class="txt" style="left:2px;top:321px">Xmed-R:</div>
<div class="txt" style="left:2px;top:337px">UCL(Xmed):0.0033</div>
<div class="txt" style="left:2px;top:353px">CL(Xmed):0.0028</div>
<div class="txt" style="left:2px;top:369px">LCL(Xmed):0.0023</div>
<div class="txt" style="left:2px;top:385px">UCL(R):0.0014</div>
<div class="txt" style="left:2px;top:401px">CL(R):0.0007</div>
</div>
<div class="a" style="left:190px;top:373px;width:1px;height:410px;background:#fdfdfd"></div>
<div class="a" style="left:191px;top:373px;width:17px;height:410px;background:linear-gradient(90deg,#e6e6e6,#f0f0f0 3px,#f0f0f0 14px,#e8e8e8)"></div>
<svg class="a" style="left:194px;top:377px" width="11" height="9"><defs><linearGradient id="ag1" x1="0" y1="0" x2="0" y2="1"><stop offset="0" stop-color="#111"/><stop offset="1" stop-color="#777"/></linearGradient><linearGradient id="ag2" x1="0" y1="0" x2="1" y2="0"><stop offset="0" stop-color="#111"/><stop offset="1" stop-color="#888"/></linearGradient></defs><path d="M1.5 7.5 L5.5 2.5 L9.5 7.5 Z" fill="url(#ag1)"/></svg>
<svg class="a" style="left:194px;top:771px" width="11" height="9"><path d="M1.5 2 L5.5 6.5 L9.5 2 Z" fill="url(#ag1)"/></svg>
<div class="a" style="left:191px;top:392px;width:15px;height:227px;border:1px solid #9a9a9a;border-radius:2px;background:linear-gradient(90deg,#f6f6f6,#ececec 50%,#dcdcdc 51%,#d2d2d2)"></div>
<div class="a" style="left:195px;top:501px;width:7px;height:2px;background:linear-gradient(90deg,#2a2a2a,#9a9a9a)"></div>
<div class="a" style="left:195px;top:504px;width:7px;height:2px;background:linear-gradient(90deg,#2a2a2a,#9a9a9a)"></div>
<div class="a" style="left:195px;top:507px;width:7px;height:2px;background:linear-gradient(90deg,#2a2a2a,#9a9a9a)"></div>
<div class="a" style="left:211px;top:91px;width:636px;height:429px;background:#fff;border-top:1px solid #fff;border-left:1px solid #fff;border-right:1px solid #fff;border-bottom:1px solid #999"></div>
<div class="a" style="left:212px;top:92px;width:634px;height:427px;border-top:1px solid #696969;border-left:1px solid #696969;border-right:1px solid #e3e3e3;border-bottom:1px solid #40454d"></div>
<div class="lbl" style="left:509px;top:96px">[Rm]</div>
<div class="a" style="left:234px;top:119px;width:592px;height:370px;border:1px solid #000"></div>
<div class="a" style="left:234px;top:451px;width:14px;height:37px;background:#f00"></div>
<div class="lbl" style="left:234px;top:437px">2</div>
<div class="a" style="left:278px;top:415px;width:29px;height:73px;background:#f00"></div>
<div class="lbl" style="left:284px;top:401px">3</div>
<div class="a" style="left:337px;top:415px;width:29px;height:73px;background:#f00"></div>
<div class="lbl" style="left:343px;top:401px">3</div>
<div class="a" style="left:396px;top:305px;width:29px;height:183px;background:#f00"></div>
<div class="lbl" style="left:402px;top:291px">6</div>
<div class="a" style="left:455px;top:123px;width:29px;height:365px;background:#f00"></div>
<div class="lbl" style="left:461px;top:109px">11</div>
<div class="a" style="left:514px;top:269px;width:29px;height:219px;background:#f00"></div>
<div class="lbl" style="left:520px;top:255px">7</div>
<div class="a" style="left:573px;top:269px;width:29px;height:219px;background:#f00"></div>
<div class="lbl" style="left:579px;top:255px">7</div>
<div class="a" style="left:632px;top:305px;width:29px;height:183px;background:#f00"></div>
<div class="lbl" style="left:638px;top:291px">6</div>
<div class="a" style="left:691px;top:415px;width:29px;height:73px;background:#f00"></div>
<div class="lbl" style="left:697px;top:401px">3</div>
<div class="a" style="left:750px;top:488px;width:29px;height:1px;background:#f00"></div>
<div class="lbl" style="left:756px;top:474px">1</div>
<div class="a" style="left:809px;top:488px;width:16px;height:1px;background:#f00"></div>
<div class="lbl" style="left:815px;top:474px">1</div>
<div class="a" style="left:211px;top:519px;width:136px;height:1px;background:#9a9a9a"></div>
<div class="a" style="left:408px;top:519px;width:438px;height:1px;background:#9a9a9a"></div>
<div class="a" style="left:212px;top:537px;width:134px;height:1px;background:#9a9a9a"></div>
<div class="a" style="left:212px;top:539px;width:197px;height:1px;background:#9a9a9a"></div>
<div class="a" style="left:212px;top:521px;width:2px;height:19px;background:#f0f0f0"></div>
<div class="a" style="left:256px;top:521px;width:1px;height:17px;background:#8a8a8a"></div>
<div class="a" style="left:258px;top:521px;width:2px;height:19px;background:#f0f0f0"></div>
<div class="a" style="left:304px;top:521px;width:1px;height:17px;background:#8a8a8a"></div>
<div class="a" style="left:306px;top:521px;width:2px;height:19px;background:#f0f0f0"></div>
<div class="a" style="left:346px;top:520px;width:2px;height:20px;background:#f0f0f0"></div>
<div class="a" style="left:408px;top:520px;width:1px;height:20px;background:#9a9a9a"></div>
<div class="txt" style="left:218px;top:525px">Xbar-R</div>
<div class="txt" style="left:263px;top:525px">Xmed-S</div>
<div class="txt" style="left:313px;top:525px">X-Rm</div>
<div class="txt" style="left:353px;top:522px">Histogram</div>
<div class="a" style="left:211px;top:547px;width:636px;height:237px;border-top:2px solid #8a8a8a;border-left:2px solid #8a8a8a;border-right:2px solid #fafafa;border-bottom:1px solid #fafafa"></div>
<div class="a" style="left:213px;top:550px;width:632px;height:215px;overflow:hidden">
<div class="hl" style="top:0px"></div>
<div class="hl" style="top:21px"></div>
<div class="hl" style="top:42px"></div>
<div class="hl" style="top:63px"></div>
<div class="hl" style="top:84px"></div>
<div class="hl" style="top:105px"></div>
<div class="hl" style="top:126px"></div>
<div class="hl" style="top:147px"></div>
<div class="hl" style="top:168px"></div>
<div class="hl" style="top:189px"></div>
<div class="hl" style="top:210px"></div>
<div class="vl" style="left:60px"></div>
<div class="vl" style="left:120px"></div>
<div class="vl" style="left:180px"></div>
<div class="vl" style="left:240px"></div>
<div class="vl" style="left:300px"></div>
<div class="vl" style="left:360px"></div>
<div class="vl" style="left:420px"></div>
<div class="vl" style="left:480px"></div>
<div class="vl" style="left:540px"></div>
<div class="vl" style="left:600px"></div>
<div class="txt" style="left:65px;top:0px">1</div>
<div class="txt" style="left:125px;top:0px">2</div>
<div class="txt" style="left:185px;top:0px">3</div>
<div class="txt" style="left:245px;top:0px">4</div>
<div class="txt" style="left:305px;top:0px">5</div>
<div class="txt" style="left:365px;top:0px">6</div>
<div class="txt" style="left:425px;top:0px">7</div>
<div class="txt" style="left:485px;top:0px">8</div>
<div class="txt" style="left:545px;top:0px">9</div>
<div class="txt" style="left:605px;top:0px">10</div>
<div class="txt" style="left:8px;top:21px"><svg class="g" width="12" height="12" style="vertical-align:-1px"><path d="M2 1h1v1h-1zM5 1h1v1h-1zM9 1h1v1h-1zM2 2h1v1h-1zM6 2h1v1h-1zM8 2h1v1h-1zM0 3h11v1h-11zM2 4h1v1h-1zM7 4h1v1h-1zM1 5h3v1h-3zM5 5h5v1h-5zM1 6h2v1h-2zM7 6h1v1h-1zM0 7h1v1h-1zM2 7h1v1h-1zM7 7h1v1h-1zM2 8h1v1h-1zM4 8h7v1h-7zM2 9h1v1h-1zM7 9h1v1h-1zM2 10h1v1h-1zM7 10h1v1h-1zM2 11h1v1h-1zM7 11h1v1h-1z"/></svg><svg class="g" width="12" height="12" style="vertical-align:-1px"><path d="M5 1h1v1h-1zM5 2h1v1h-1zM0 3h11v1h-11zM4 4h3v1h-3zM3 5h1v1h-1zM5 5h1v1h-1zM7 5h1v1h-1zM3 6h1v1h-1zM5 6h1v1h-1zM7 6h1v1h-1zM2 7h1v1h-1zM5 7h1v1h-1zM8 7h1v1h-1zM1 8h1v1h-1zM5 8h1v1h-1zM9 8h1v1h-1zM0 9h1v1h-1zM3 9h5v1h-5zM10 9h1v1h-1zM5 10h1v1h-1zM5 11h1v1h-1z"/></svg>1</div>
<div class="txt" style="left:65px;top:21px">0.0030</div>
<div class="txt" style="left:125px;top:21px">0.0033</div>
<div class="txt" style="left:185px;top:21px">0.0028</div>
<div class="txt" style="left:245px;top:21px">0.0026</div>
<div class="txt" style="left:305px;top:21px">0.0027</div>
<div class="txt" style="left:365px;top:21px">0.0027</div>
<div class="txt" style="left:425px;top:21px">0.0023</div>
<div class="txt" style="left:485px;top:21px">0.0028</div>
<div class="txt" style="left:545px;top:21px">0.0030</div>
<div class="txt" style="left:605px;top:21px">0.0027</div>
<div class="txt" style="left:8px;top:42px"><svg class="g" width="12" height="12" style="vertical-align:-1px"><path d="M2 1h1v1h-1zM5 1h1v1h-1zM9 1h1v1h-1zM2 2h1v1h-1zM6 2h1v1h-1zM8 2h1v1h-1zM0 3h11v1h-11zM2 4h1v1h-1zM7 4h1v1h-1zM1 5h3v1h-3zM5 5h5v1h-5zM1 6h2v1h-2zM7 6h1v1h-1zM0 7h1v1h-1zM2 7h1v1h-1zM7 7h1v1h-1zM2 8h1v1h-1zM4 8h7v1h-7zM2 9h1v1h-1zM7 9h1v1h-1zM2 10h1v1h-1zM7 10h1v1h-1zM2 11h1v1h-1zM7 11h1v1h-1z"/></svg><svg class="g" width="12" height="12" style="vertical-align:-1px"><path d="M5 1h1v1h-1zM5 2h1v1h-1zM0 3h11v1h-11zM4 4h3v1h-3zM3 5h1v1h-1zM5 5h1v1h-1zM7 5h1v1h-1zM3 6h1v1h-1zM5 6h1v1h-1zM7 6h1v1h-1zM2 7h1v1h-1zM5 7h1v1h-1zM8 7h1v1h-1zM1 8h1v1h-1zM5 8h1v1h-1zM9 8h1v1h-1zM0 9h1v1h-1zM3 9h5v1h-5zM10 9h1v1h-1zM5 10h1v1h-1zM5 11h1v1h-1z"/></svg>2</div>
<div class="txt" style="left:65px;top:42px">0.0030</div>
<div class="txt" style="left:125px;top:42px">0.0028</div>
<div class="txt" style="left:185px;top:42px">0.0027</div>
<div class="txt" style="left:245px;top:42px">0.0029</div>
<div class="txt" style="left:305px;top:42px">0.0025</div>
<div class="txt" style="left:365px;top:42px">0.0027</div>
<div class="txt" style="left:425px;top:42px">0.0027</div>
<div class="txt" style="left:485px;top:42px">0.0030</div>
<div class="txt" style="left:545px;top:42px">0.0026</div>
<div class="txt" style="left:605px;top:42px">0.0025</div>
<div class="txt" style="left:8px;top:63px"><svg class="g" width="12" height="12" style="vertical-align:-1px"><path d="M2 1h1v1h-1zM5 1h1v1h-1zM9 1h1v1h-1zM2 2h1v1h-1zM6 2h1v1h-1zM8 2h1v1h-1zM0 3h11v1h-11zM2 4h1v1h-1zM7 4h1v1h-1zM1 5h3v1h-3zM5 5h5v1h-5zM1 6h2v1h-2zM7 6h1v1h-1zM0 7h1v1h-1zM2 7h1v1h-1zM7 7h1v1h-1zM2 8h1v1h-1zM4 8h7v1h-7zM2 9h1v1h-1zM7 9h1v1h-1zM2 10h1v1h-1zM7 10h1v1h-1zM2 11h1v1h-1zM7 11h1v1h-1z"/></svg><svg class="g" width="12" height="12" style="vertical-align:-1px"><path d="M5 1h1v1h-1zM5 2h1v1h-1zM0 3h11v1h-11zM4 4h3v1h-3zM3 5h1v1h-1zM5 5h1v1h-1zM7 5h1v1h-1zM3 6h1v1h-1zM5 6h1v1h-1zM7 6h1v1h-1zM2 7h1v1h-1zM5 7h1v1h-1zM8 7h1v1h-1zM1 8h1v1h-1zM5 8h1v1h-1zM9 8h1v1h-1zM0 9h1v1h-1zM3 9h5v1h-5zM10 9h1v1h-1zM5 10h1v1h-1zM5 11h1v1h-1z"/></svg>3</div>
<div class="txt" style="left:65px;top:63px">0.0027</div>
<div class="txt" style="left:125px;top:63px">0.0025</div>
<div class="txt" style="left:185px;top:63px">0.0029</div>
<div class="txt" style="left:245px;top:63px">0.0029</div>
<div class="txt" style="left:305px;top:63px">0.0028</div>
<div class="txt" style="left:365px;top:63px">0.0032</div>
<div class="txt" style="left:425px;top:63px">0.0027</div>
<div class="txt" style="left:485px;top:63px">0.0026</div>
<div class="txt" style="left:545px;top:63px">0.0025</div>
<div class="txt" style="left:605px;top:63px">0.0025</div>
<div class="txt" style="left:8px;top:84px"><svg class="g" width="12" height="12" style="vertical-align:-1px"><path d="M2 1h1v1h-1zM5 1h1v1h-1zM9 1h1v1h-1zM2 2h1v1h-1zM6 2h1v1h-1zM8 2h1v1h-1zM0 3h11v1h-11zM2 4h1v1h-1zM7 4h1v1h-1zM1 5h3v1h-3zM5 5h5v1h-5zM1 6h2v1h-2zM7 6h1v1h-1zM0 7h1v1h-1zM2 7h1v1h-1zM7 7h1v1h-1zM2 8h1v1h-1zM4 8h7v1h-7zM2 9h1v1h-1zM7 9h1v1h-1zM2 10h1v1h-1zM7 10h1v1h-1zM2 11h1v1h-1zM7 11h1v1h-1z"/></svg><svg class="g" width="12" height="12" style="vertical-align:-1px"><path d="M5 1h1v1h-1zM5 2h1v1h-1zM0 3h11v1h-11zM4 4h3v1h-3zM3 5h1v1h-1zM5 5h1v1h-1zM7 5h1v1h-1zM3 6h1v1h-1zM5 6h1v1h-1zM7 6h1v1h-1zM2 7h1v1h-1zM5 7h1v1h-1zM8 7h1v1h-1zM1 8h1v1h-1zM5 8h1v1h-1zM9 8h1v1h-1zM0 9h1v1h-1zM3 9h5v1h-5zM10 9h1v1h-1zM5 10h1v1h-1zM5 11h1v1h-1z"/></svg>4</div>
<div class="txt" style="left:65px;top:84px">0.0025</div>
<div class="txt" style="left:125px;top:84px">0.0026</div>
<div class="txt" style="left:185px;top:84px">0.0022</div>
<div class="txt" style="left:245px;top:84px">0.0027</div>
<div class="txt" style="left:305px;top:84px">0.0022</div>
<div class="txt" style="left:365px;top:84px">0.0023</div>
<div class="txt" style="left:425px;top:84px">0.0025</div>
<div class="txt" style="left:485px;top:84px">0.0027</div>
<div class="txt" style="left:545px;top:84px">0.0025</div>
<div class="txt" style="left:605px;top:84px">0.0031</div>
<div class="txt" style="left:8px;top:105px"><svg class="g" width="12" height="12" style="vertical-align:-1px"><path d="M2 1h1v1h-1zM5 1h1v1h-1zM9 1h1v1h-1zM2 2h1v1h-1zM6 2h1v1h-1zM8 2h1v1h-1zM0 3h11v1h-11zM2 4h1v1h-1zM7 4h1v1h-1zM1 5h3v1h-3zM5 5h5v1h-5zM1 6h2v1h-2zM7 6h1v1h-1zM0 7h1v1h-1zM2 7h1v1h-1zM7 7h1v1h-1zM2 8h1v1h-1zM4 8h7v1h-7zM2 9h1v1h-1zM7 9h1v1h-1zM2 10h1v1h-1zM7 10h1v1h-1zM2 11h1v1h-1zM7 11h1v1h-1z"/></svg><svg class="g" width="12" height="12" style="vertical-align:-1px"><path d="M5 1h1v1h-1zM5 2h1v1h-1zM0 3h11v1h-11zM4 4h3v1h-3zM3 5h1v1h-1zM5 5h1v1h-1zM7 5h1v1h-1zM3 6h1v1h-1zM5 6h1v1h-1zM7 6h1v1h-1zM2 7h1v1h-1zM5 7h1v1h-1zM8 7h1v1h-1zM1 8h1v1h-1zM5 8h1v1h-1zM9 8h1v1h-1zM0 9h1v1h-1zM3 9h5v1h-5zM10 9h1v1h-1zM5 10h1v1h-1zM5 11h1v1h-1z"/></svg>5</div>
<div class="txt" style="left:65px;top:105px">0.0031</div>
<div class="txt" style="left:125px;top:105px">0.0028</div>
<div class="txt" style="left:185px;top:105px">0.0027</div>
<div class="txt" style="left:245px;top:105px">0.0028</div>
<div class="txt" style="left:305px;top:105px">0.0030</div>
<div class="txt" style="left:365px;top:105px">0.0024</div>
<div class="txt" style="left:425px;top:105px">0.0031</div>
<div class="txt" style="left:485px;top:105px">0.0026</div>
<div class="txt" style="left:545px;top:105px">0.0023</div>
<div class="txt" style="left:605px;top:105px">0.0028</div>
<div class="txt" style="left:7px;top:126px">X</div>
<div class="txt" style="left:65px;top:126px">0.0029</div>
<div class="txt" style="left:125px;top:126px">0.0028</div>
<div class="txt" style="left:185px;top:126px">0.0028</div>
<div class="txt" style="left:245px;top:126px">0.0028</div>
<div class="txt" style="left:305px;top:126px">0.0027</div>
<div class="txt" style="left:365px;top:126px">0.0027</div>
<div class="txt" style="left:425px;top:126px">0.0027</div>
<div class="txt" style="left:485px;top:126px">0.0027</div>
<div class="txt" style="left:545px;top:126px">0.0027</div>
<div class="txt" style="left:605px;top:126px">0.0027</div>
<div class="txt" style="left:7px;top:147px">Xmed</div>
<div class="txt" style="left:65px;top:147px">0.0030</div>
<div class="txt" style="left:125px;top:147px">0.0029</div>
<div class="txt" style="left:185px;top:147px">0.0029</div>
<div class="txt" style="left:245px;top:147px">0.0029</div>
<div class="txt" style="left:305px;top:147px">0.0029</div>
<div class="txt" style="left:365px;top:147px">0.0028</div>
<div class="txt" style="left:425px;top:147px">0.0028</div>
<div class="txt" style="left:485px;top:147px">0.0028</div>
<div class="txt" style="left:545px;top:147px">0.0028</div>
<div class="txt" style="left:605px;top:147px">0.0028</div>
<div class="txt" style="left:7px;top:168px">R</div>
<div class="txt" style="left:65px;top:168px">0.0005</div>
<div class="txt" style="left:125px;top:168px">0.0007</div>
<div class="txt" style="left:185px;top:168px">0.0007</div>
<div class="txt" style="left:245px;top:168px">0.0006</div>
<div class="txt" style="left:305px;top:168px">0.0006</div>
<div class="txt" style="left:365px;top:168px">0.0007</div>
<div class="txt" style="left:425px;top:168px">0.0007</div>
<div class="txt" style="left:485px;top:168px">0.0007</div>
<div class="txt" style="left:545px;top:168px">0.0007</div>
<div class="txt" style="left:605px;top:168px">0.0006</div>
<div class="txt" style="left:7px;top:189px">S</div>
<div class="txt" style="left:65px;top:189px">0.0002</div>
<div class="txt" style="left:125px;top:189px">0.0003</div>
<div class="txt" style="left:185px;top:189px">0.0003</div>
<div class="txt" style="left:245px;top:189px">0.0002</div>
<div class="txt" style="left:305px;top:189px">0.0003</div>
<div class="txt" style="left:365px;top:189px">0.0003</div>
<div class="txt" style="left:425px;top:189px">0.0003</div>
<div class="txt" style="left:485px;top:189px">0.0003</div>
<div class="txt" style="left:545px;top:189px">0.0003</div>
<div class="txt" style="left:605px;top:189px">0.0002</div>
</div>
<div class="a" style="left:213px;top:765px;width:632px;height:1px;background:#fdfdfd"></div>
<div class="a" style="left:213px;top:766px;width:632px;height:17px;background:linear-gradient(180deg,#e6e6e6,#f0f0f0 3px,#f0f0f0 14px,#e8e8e8)"></div>
<svg class="a" style="left:216px;top:768px" width="9" height="11"><path d="M7 1.5 L2.5 5.5 L7 9.5 Z" fill="url(#ag2)"/></svg>
<svg class="a" style="left:832px;top:768px" width="9" height="11"><path d="M2.5 1.5 L7 5.5 L2.5 9.5 Z" fill="url(#ag2)"/></svg>
<div class="a" style="left:231px;top:766px;width:522px;height:15px;border:1px solid #9a9a9a;border-radius:2px;background:linear-gradient(180deg,#f6f6f6,#ececec 50%,#dcdcdc 51%,#d2d2d2)"></div>
<div class="a" style="left:488px;top:770px;width:2px;height:7px;background:linear-gradient(180deg,#2a2a2a,#9a9a9a)"></div>
<div class="a" style="left:491px;top:770px;width:2px;height:7px;background:linear-gradient(180deg,#2a2a2a,#9a9a9a)"></div>
<div class="a" style="left:494px;top:770px;width:2px;height:7px;background:linear-gradient(180deg,#2a2a2a,#9a9a9a)"></div>
<div class="a" style="left:0;top:786px;width:850px;height:2px;background:#ececec"></div>
</body></html>
